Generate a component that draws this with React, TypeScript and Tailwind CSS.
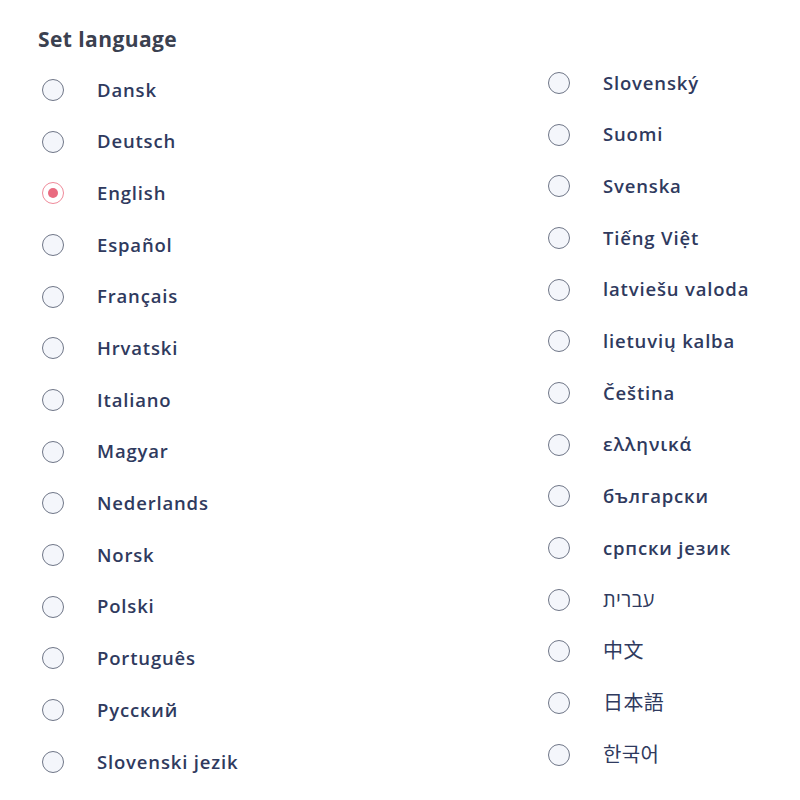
const left = [
  "Dansk",
  "Deutsch",
  "English",
  "Español",
  "Français",
  "Hrvatski",
  "Italiano",
  "Magyar",
  "Nederlands",
  "Norsk",
  "Polski",
  "Português",
  "Русский",
  "Slovenski jezik",
];

const right = [
  "Slovenský",
  "Suomi",
  "Svenska",
  "Tiếng Việt",
  "latviešu valoda",
  "lietuvių kalba",
  "Čeština",
  "ελληνικά",
  "български",
  "српски језик",
  "עברית",
  "中文",
  "日本語",
  "한국어",
];

// scripts that show in a regular weight in the screenshot
const plain = ["עברית", "中文", "日本語", "한국어"];

const Radio = ({ checked }: { checked?: boolean }) =>
  checked ? (
    <span className="w-[22px] h-[22px] rounded-full border-[1.5px] border-[#ef8a9a] flex items-center justify-center shrink-0">
      <span className="w-[10px] h-[10px] rounded-full bg-[#e96b80]" />
    </span>
  ) : (
    <span className="w-[22px] h-[22px] rounded-full border-[1.5px] border-[#6f7687] bg-[#f4f6fb] shrink-0" />
  );

const Row = ({ label, checked }: { label: string; checked?: boolean }) => (
  <div className="h-[51.7px] flex items-center">
    <Radio checked={checked} />
    {plain.includes(label) ? (
      <span className="ml-[33px] text-[20px] font-normal text-[#2f3a5e] leading-none tracking-[0.02em]">
        {label}
      </span>
    ) : (
      <span className="ml-[33px] text-[18.5px] font-semibold text-[#2f3a5e] leading-none tracking-[0.045em]">
        {label}
      </span>
    )}
  </div>
);

export default function App() {
  return (
    <div
      className="w-[800px] h-[800px] bg-white flex overflow-hidden"
      style={{ fontFamily: '"Open Sans", "Noto Sans", "Noto Sans CJK SC", sans-serif' }}
    >
      <div className="w-[548px] shrink-0 pl-[42px] pt-[26px]">
        <h1 className="-ml-[4px] h-[28px] flex items-center text-[21px] font-bold text-[#3b4150] tracking-[0.02em]">
          Set language
        </h1>
        <div className="mt-[10px]">
          {left.map((l) => (
            <Row key={l} label={l} checked={l === "English"} />
          ))}
        </div>
      </div>
      <div className="pt-[57px]">
        {right.map((l) => (
          <Row key={l} label={l} />
        ))}
      </div>
    </div>
  );
}
